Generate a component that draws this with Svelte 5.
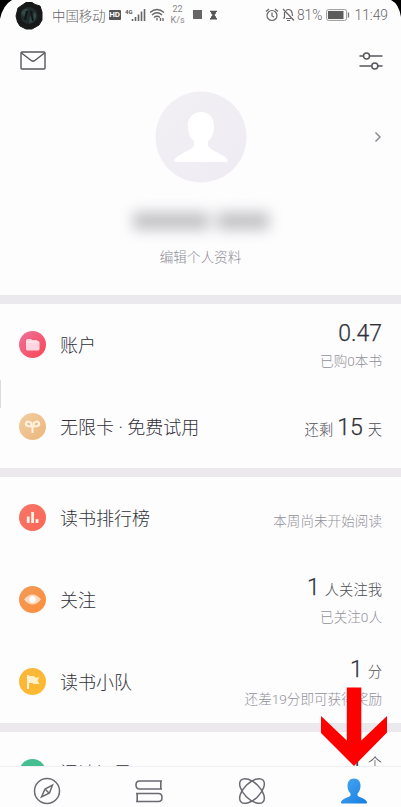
<script>
  const account = [
    { icon: 'wallet', label: '账户', big: '0.47', sub: '已购0本书' },
    { icon: 'sprout', label: '无限卡 · 免费试用', pre: '还剩', big: '15', unit: '天' }
  ];
  const social = [
    { icon: 'chart', label: '读书排行榜', sub: '本周尚未开始阅读' },
    { icon: 'eye', label: '关注', big: '1', unit: '人关注我', sub: '已关注0人' },
    { icon: 'flag', label: '读书小队', big: '1', unit: '分', sub: '还差19分即可获得奖励' }
  ];
  const notes = [{ icon: 'note', label: '阅读记录', big: '1', unit: '个', sub: '' }];
  const groups = [account, social, notes];
</script>

<div class="screen">
  <svg class="corners" width="401" height="24" viewBox="0 0 401 24">
    <path d="M0 0H12Q3 5 0 19Z" fill="#000" />
    <path d="M401 0H391Q399 4 401 17Z" fill="#000" />
  </svg>
  <div class="status">
    <svg class="camera" width="28" height="29" viewBox="0 0 28 29">
      <path d="M11 1.500L17 1.500L20 3.500L25 5L27 11L27 19L24 24L17 28L11 28L5 25L2.500 21L1 15L3 7Z" fill="#171919" stroke="#171919" stroke-linejoin="round" />
      <circle cx="14" cy="14.500" r="8.500" fill="#222b2b" />
      <path d="M6 12Q9 7 13 8L9 16ZM15 16L20 11Q23 16 18 21L14 22Z" fill="#314a47" />
      <path d="M12 10L10 19M16 10L18 20" stroke="#101616" stroke-width="2" />
    </svg>
    <span class="carrier">中国移动</span>
    <span class="hd">HD</span>
    <svg class="signal" width="21" height="14" viewBox="0 0 21 14">
      <text x="0" y="5.500" font-size="6" font-weight="700" fill="#555">4G</text>
      <path d="M7.500 11V13M10.500 9V13M13.500 6.500V13M16.500 3.500V13M19.500 1V13" stroke="#666" stroke-width="1.600" />
    </svg>
    <svg class="wifi" width="16" height="14" viewBox="0 0 16 14" fill="none" stroke="#666" stroke-width="1.300">
      <path d="M1 4.500Q8 -1.500 15 4.500M3 7Q8 2.500 13 7M5 9.500Q8 7 11 9.500" />
      <path d="M8 10V12.500M11.500 10V13M14 10V13" />
    </svg>
    <span class="speed"><span>22</span><span>K/s</span></span>
    <i class="stop"></i>
    <svg class="glass" width="7" height="10" viewBox="0 0 8 10"><path d="M0 0H8V1.500H7Q7 4 5 5Q7 6 7 8.500H8V10H0V8.500H1Q1 6 3 5Q1 4 1 1.500H0Z" fill="#555" /></svg>
    <span class="right">
      <svg width="14" height="14" viewBox="0 0 14 14" fill="none" stroke="#666" stroke-width="1.200"><circle cx="7" cy="7.500" r="5" /><path d="M7 4.500V8L9 9M1 3.500L4 1M10 1L13 3.500" /></svg>
      <svg class="bell" width="13" height="14" viewBox="0 0 13 14" fill="none" stroke="#666" stroke-width="1.200"><path d="M1 1L12 12.500M2.500 4V10H1M4 2.500Q6.500 .5 9 2.500Q10.500 4 10.500 8M4 10.500H9M5 12.500H8" /></svg>
      <span class="pct">81%</span>
      <svg class="battery" width="24" height="12" viewBox="0 0 24 12"><rect x=".6" y=".6" width="20" height="10.800" rx="2" fill="none" stroke="#999" /><rect x="2" y="2" width="15.500" height="8" fill="#5c5c5c" /><path d="M22.500 3.500V8.500" stroke="#777" stroke-width="1.300" /></svg>
      <span class="time">11:49</span>
    </span>
  </div>

  <div class="tools">
    <svg width="26" height="19" viewBox="0 0 26 19" fill="none" stroke="#55565c" stroke-width="1.400"><rect x="1" y="1" width="24" height="17" rx="1" /><path d="M1.500 2L11.500 9.700Q13 10.700 14.500 9.700L24.500 2" /></svg>
    <svg class="sliders" width="24" height="20" viewBox="0 0 24 20" fill="none" stroke="#55565c" stroke-width="1.500"><path d="M.5 5H4.500M10.500 5H23.500M.5 15H12.500M18.500 15H23.500" /><circle cx="7.500" cy="5" r="3" /><circle cx="15.800" cy="15" r="3" /></svg>
  </div>

  <div class="profile">
    <svg class="avatar" width="92" height="92" viewBox="0 0 92 92">
      <defs><linearGradient id="av" x1="0" y1="0" x2="1" y2="1"><stop offset="0" stop-color="#f1f0f3" /><stop offset="1" stop-color="#efebf4" /></linearGradient></defs>
      <circle cx="46" cy="46" r="45.500" fill="url(#av)" />
      <path d="M46 21C54 21 59 26.500 59 35C59 42 57 47 53 50.500V54C53 59 71 63.500 72.500 69Q73 71 70.500 71H21.500Q19 71 19.500 69C21 63.500 39 59 39 54V50.500C35 47 33 42 33 35C33 26.500 38 21 46 21Z" fill="#fff" />
    </svg>
    <svg class="chev" width="8" height="12" viewBox="0 0 8 12"><path d="M1.500 1.500L6 6L1.500 10.500" fill="none" stroke="#8a8b93" stroke-width="1.500" /></svg>
    <div class="name"><i></i><i></i></div>
    <div class="edit">编辑个人资料</div>
  </div>

  {#each groups as rows}
    <section>
      {#each rows as r}
        <div class="row">
          <span class="ico {r.icon}">
            <svg width="27" height="27" viewBox="0 0 27 27">
              {#if r.icon === 'wallet'}
                <path d="M7 9.500Q7 8 8.500 8H12L13 9H17.500Q18.500 9 18.500 10L20.500 11V18Q20.500 19.500 19 19.500H8.500Q7 19.500 7 18Z" fill="#ffd5df" /><path d="M7.500 11H20" stroke="#fff" opacity=".6" />
              {:else if r.icon === 'sprout'}
                <g fill="none" stroke="#fff3e2" stroke-width="2"><ellipse cx="9.700" cy="11" rx="2.900" ry="2.300" transform="rotate(20 9.700 11)" /><ellipse cx="17.300" cy="11" rx="2.900" ry="2.300" transform="rotate(-20 17.300 11)" /><path d="M11.500 12.800Q13.500 13.500 13.500 15V20M15.500 12.800Q13.500 13.500 13.500 15" /></g>
              {:else if r.icon === 'chart'}
                <path d="M9.200 12.500V19M13.600 8V19M18 15V19" stroke="#fff0e8" stroke-width="2.800" />
              {:else if r.icon === 'eye'}
                <path d="M5 13.500Q13.500 3.500 22 13.500Q13.500 23.500 5 13.500Z" fill="#ffd9bb" /><circle cx="13.500" cy="13.500" r="3.200" fill="#fff" />
              {:else if r.icon === 'flag'}
                <path d="M8 7H10V21H8Z" fill="#fff3d4" /><path d="M10 8H15L16 9.500H20.500L18.500 12.500L20.500 16H14.500L13.500 15H10Z" fill="#fff0c8" />
              {/if}
            </svg>
          </span>
          <span class="label">{r.label}</span>
          <div class="value" class:only={!r.big} class:single={r.sub === undefined}>
            {#if r.big}
              <div class="main">{#if r.pre}<span class="pre">{r.pre}</span>{/if}<b>{r.big}</b>{#if r.unit}<span class="unit">{r.unit}</span>{/if}</div>
            {/if}
            {#if r.sub !== undefined}<div class="sub">{r.sub}</div>{/if}
          </div>
        </div>
      {/each}
    </section>
  {/each}

  <nav>
    <svg width="28" height="28" viewBox="0 0 28 28" fill="none" stroke="#6a6b71" stroke-width="1.500"><circle cx="14" cy="14" r="12.500" /><path d="M19.500 8L16.500 16L8.500 20L12 12Z" /><path d="M12.500 12.500L16 16" /></svg>
    <svg width="28" height="28" viewBox="0 0 28 28" fill="none" stroke="#6a6b71" stroke-width="1.600"><path d="M27 4H4.500Q1 4 1 8Q1 12 4.500 12H27M25.800 4V12M1 16.500H23.500Q27 16.500 27 20.500Q27 24.500 23.500 24.500H1M2.200 16.500V24.500" /></svg>
    <svg width="28" height="28" viewBox="0 0 28 28" fill="none" stroke="#6a6b71" stroke-width="1.500"><ellipse cx="14" cy="14" rx="15.500" ry="8" transform="rotate(45 14 14)" /><ellipse cx="14" cy="14" rx="15.500" ry="8" transform="rotate(-45 14 14)" /></svg>
    <svg width="28" height="28" viewBox="0 0 28 28"><defs><linearGradient id="me" x1="0" y1="0" x2="1" y2="1"><stop offset="0" stop-color="#49a8f2" /><stop offset="1" stop-color="#167ee0" /></linearGradient></defs><path d="M14 1.500C18 1.500 20.500 4.300 20.500 8.500C20.500 12 19.500 14.500 17.500 16.500V18.500C18 20 26 21.500 27 25Q27.200 26.500 26 26.500H2Q.8 26.500 1 25C2 21.500 10 20 10.500 18.500V16.500C8.500 14.500 7.500 12 7.500 8.500C7.500 4.300 10 1.500 14 1.500Z" fill="url(#me)" /></svg>
  </nav>
  <svg class="arrow" width="68" height="80" viewBox="0 0 68 80"><path d="M26.800 .5H41.300V53.500L67 29V45.500L34 79L1 46V29L26.800 53.500Z" fill="#fe0000" /></svg>
  <i class="edge"></i>
</div>

<style>
  :global(body) { margin: 0; background: #fefdfe; }
  .screen { position: relative; width: 401px; height: 807px; overflow: hidden; background: #fefdfe; font-family: Roboto, "Noto Sans CJK SC", sans-serif; color: #303139; font-weight: 300; display: flex; flex-direction: column; }
  .corners { position: absolute; left: 0; top: 0; }
  svg { display: block; flex: none; }
  .status { height: 30px; flex: none; box-sizing: border-box; padding: 0 13px 0 15px; display: flex; align-items: center; color: #666; position: relative; }
  .carrier { font-size: 13.400px; margin-left: 9px; white-space: nowrap; }
  .hd { background: #555; color: #fff; font-size: 8px; line-height: 10px; width: 12px; text-align: center; border-radius: 1px; font-weight: 700; margin-left: 3px; }
  .signal { margin-left: 4px; }
  .wifi { margin-left: 3px; }
  .speed { display: flex; flex-direction: column; align-items: center; font-size: 9px; line-height: 11px; width: 16px; margin-left: 5px; font-weight: 400; color: #888; }
  .stop { width: 9px; height: 9px; background: #666; margin-left: 7px; margin-top: -1px; }
  .glass { margin-left: 8px; margin-top: -1px; }
  .right { display: flex; align-items: center; margin-left: auto; font-size: 13.800px; }
  .bell { margin-left: 3px; }
  .pct { margin-left: 2px; }
  .battery { margin: -1px 4px 0; }
  .tools { height: 62px; flex: none; box-sizing: border-box; padding: 21px 18px 0 20px; display: flex; justify-content: space-between; align-items: flex-start; }
  .profile { height: 203px; flex: none; display: flex; flex-direction: column; align-items: center; position: relative; }
  .chev { position: absolute; right: 19px; top: 39px; }
  .avatar { margin-top: -1px; }
  .name { display: flex; gap: 8px; margin-top: 29px; height: 18px; filter: blur(7px); }
  .name i { background: #c2c2c5; width: 76px; }
  .name i + i { width: 52px; }
  .edit { font-size: 13.600px; line-height: 20px; margin-top: 17px; color: #8b8c97; }
  section { border-top: 9px solid #ebe9ee; flex: none; }
  .row { height: 82px; box-sizing: border-box; display: flex; align-items: center; padding: 0 19px 1.500px; }
  .ico { width: 27px; height: 27px; border-radius: 50%; }
  .wallet { background: linear-gradient(135deg, #ee719b, #fa4652); }
  .sprout { background: linear-gradient(135deg, #f3cda2, #ebb67b); }
  .chart { background: linear-gradient(135deg, #f57768, #fd6555); }
  .eye { background: linear-gradient(135deg, #ef9c59, #ff8d3c); }
  .flag { background: linear-gradient(135deg, #f8b63d, #ffba2e); }
  .note { background: #47be91; }
  .label { font-size: 18px; margin-left: 14px; white-space: nowrap; }
  .value { margin-left: auto; text-align: right; white-space: nowrap; display: flex; flex-direction: column; gap: 3px; padding-top: 3px; }
  .value.only { padding-top: 7px; }
  .value.single { padding-top: 6px; }
  .main { line-height: 28px; display: flex; align-items: baseline; justify-content: flex-end; }
  b { font-size: 23px; font-weight: 350; color: #303139; -webkit-text-stroke: .25px #303139; }
  .pre, .unit { font-size: 14.300px; color: #4c4d55; }
  .pre { margin-right: 4px; }
  .unit { margin-left: 5px; }
  .sub { font-size: 13.600px; line-height: 20px; color: #8f909a; min-height: 20px; }
  nav { position: absolute; left: 0; right: 0; bottom: 0; box-sizing: border-box; height: 41px; background: #fefdfe; border-top: 1px solid #f0eff3; display: flex; justify-content: space-between; padding: 10px 33px 0; }
  .arrow { position: absolute; left: 320px; top: 687px; }
  .edge { position: absolute; left: 0; top: 380px; width: 1px; height: 28px; background: #dddce0; }
</style>
